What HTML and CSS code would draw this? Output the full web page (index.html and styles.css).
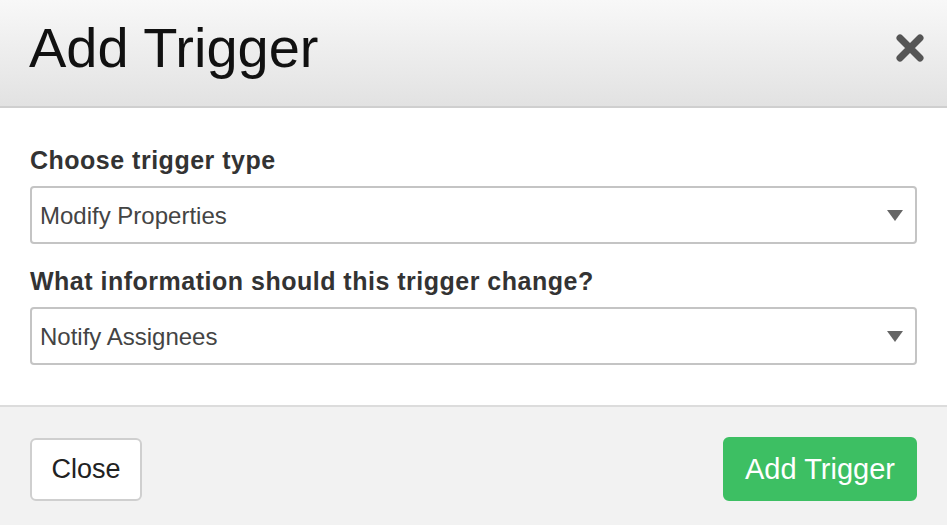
FILE: index.html
```html
<!DOCTYPE html>
<html>
<head>
<meta charset="utf-8">
<link rel="stylesheet" href="styles.css">
</head>
<body>
<div class="modal">
  <header class="modal-header">
    <h1 class="modal-title">Add Trigger</h1>
    <button class="close-x" aria-label="Close">
      <svg width="30" height="30" viewBox="0 0 30 30"><path d="M5 5 L25 25 M25 5 L5 25" stroke="#555" stroke-width="7" stroke-linecap="round"/></svg>
    </button>
  </header>
  <main class="modal-body">
    <label class="field-label">Choose trigger type</label>
    <div class="select">
      <span class="select-text">Modify Properties</span>
      <span class="caret"></span>
    </div>
    <label class="field-label second">What information should this trigger change?</label>
    <div class="select">
      <span class="select-text">Notify Assignees</span>
      <span class="caret"></span>
    </div>
  </main>
  <footer class="modal-footer">
    <button class="btn btn-default">Close</button>
    <button class="btn btn-primary">Add Trigger</button>
  </footer>
</div>
</body>
</html>
```
FILE: styles.css
```css
html, body {
  margin: 0;
  padding: 0;
}
body {
  width: 947px;
  height: 525px;
  overflow: hidden;
  font-family: "Liberation Sans", Arial, sans-serif;
  background: #fff;
}
.modal {
  display: flex;
  flex-direction: column;
  height: 525px;
}
.modal-header {
  background: linear-gradient(#f8f8f8, #e2e2e2);
  border-bottom: 2px solid #cfcfcf;
  display: flex;
  align-items: center;
  justify-content: space-between;
  padding: 0 21px 10px 29px;
  box-sizing: border-box;
  height: 108px;
}
.modal-title {
  margin: 0;
  font-weight: normal;
  font-size: 56px;
  line-height: 60px;
  color: #111;
}
.close-x {
  background: none;
  border: 0;
  padding: 0;
  width: 32px;
  height: 32px;
  display: flex;
  align-items: center;
  justify-content: center;
}
.modal-body {
  padding: 37px 30px 0 30px;
  height: 260px;
  display: flex;
  flex-direction: column;
}
.field-label {
  font-weight: bold;
  font-size: 25px;
  letter-spacing: 0.5px;
  color: #333;
  line-height: 30px;
  margin-bottom: 11px;
}
.field-label.second {
  margin-top: 22px;
}
.select {
  height: 52px;
  border: 2px solid #c4c4c4;
  border-radius: 4px;
  display: flex;
  align-items: center;
  justify-content: space-between;
  padding: 2px 12px 0 8px;
}
.select-text {
  font-size: 24px;
  color: #444;
}
.caret {
  width: 0;
  height: 0;
  border-left: 8px solid transparent;
  border-right: 8px solid transparent;
  border-top: 11px solid #666;
  margin-top: -2px;
}
.modal-footer {
  flex: 1;
  background: #f2f2f2;
  border-top: 2px solid #dcdcdc;
  display: flex;
  justify-content: space-between;
  align-items: flex-start;
  padding: 30px 30px 0 30px;
}
.btn {
  font-family: "Liberation Sans", Arial, sans-serif;
  font-size: 27px;
  border-radius: 6px;
  height: 64px;
  padding: 0;
}
.btn-default {
  background: #fff;
  border: 2px solid #cfcfcf;
  color: #222;
  width: 112px;
  height: 63px;
  margin-top: 1px;
}
.btn-primary {
  background: #3dbf63;
  border: 2px solid #3dbf63;
  color: #fff;
  width: 194px;
  font-size: 29px;
}
```
